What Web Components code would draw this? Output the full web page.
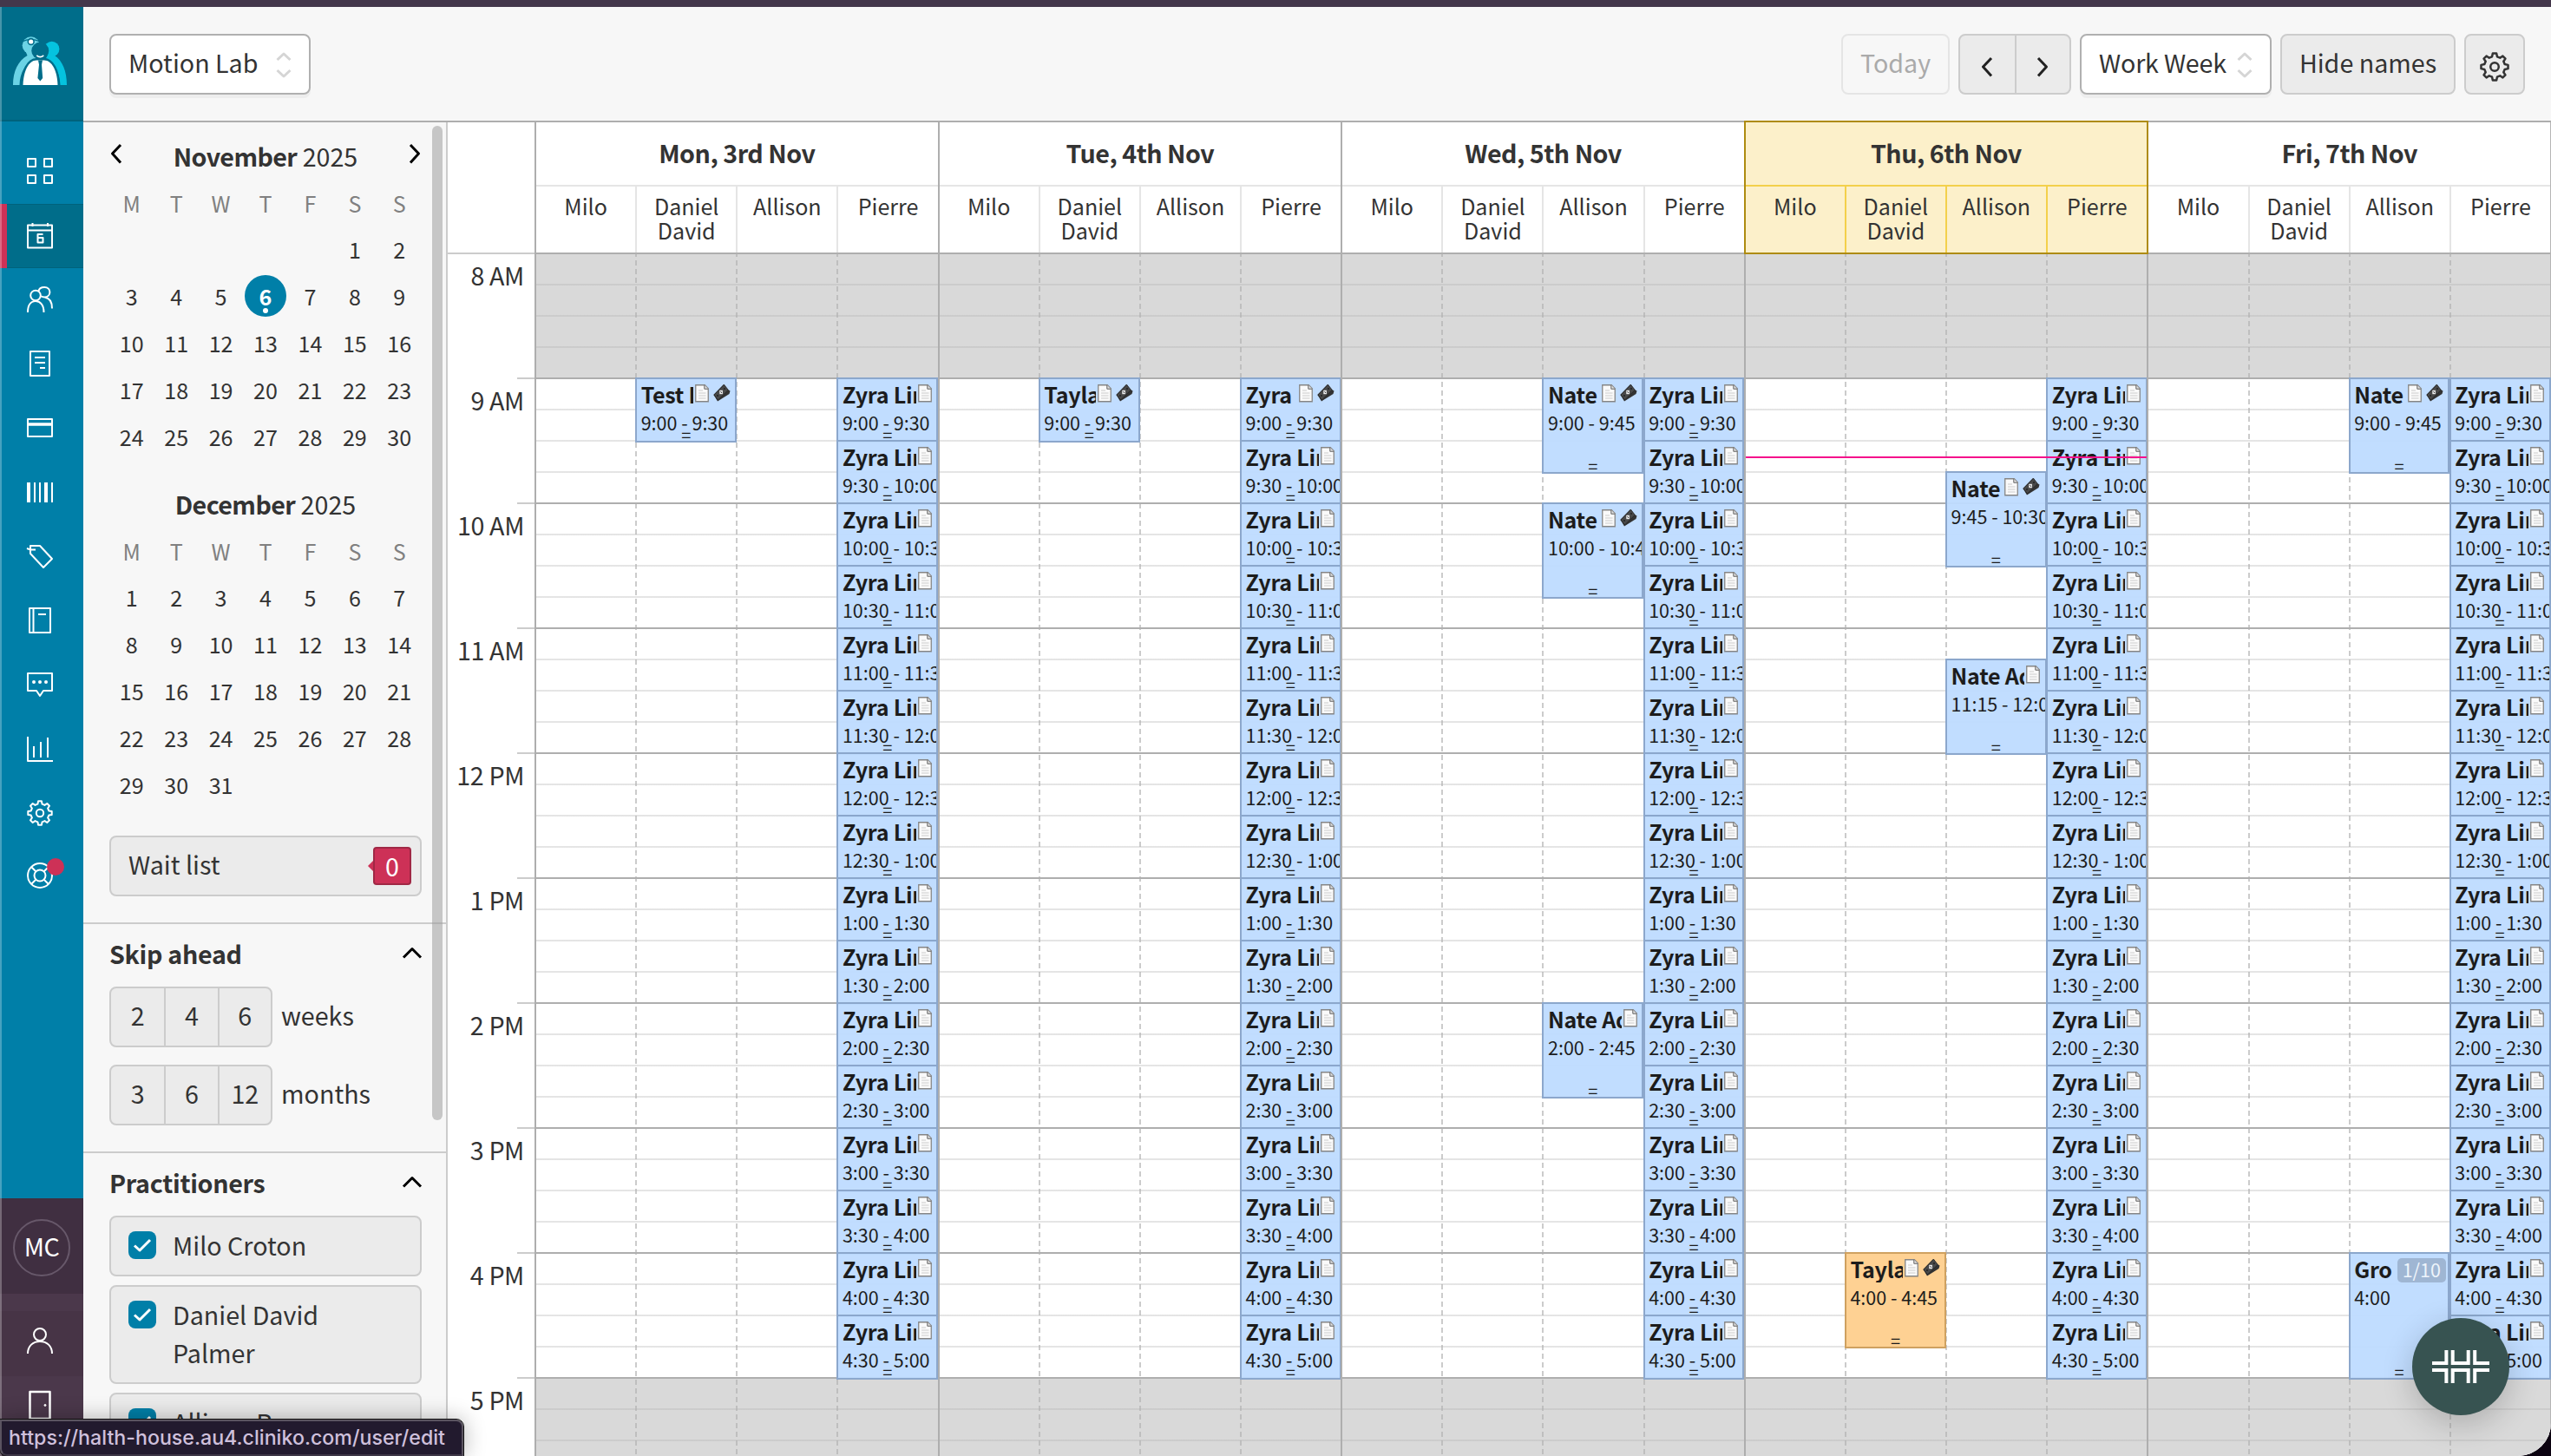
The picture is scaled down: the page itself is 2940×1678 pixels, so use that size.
<!DOCTYPE html>
<html lang="en">
<head>
<meta charset="utf-8">
<title>Appointments</title>
<style>
  html, body {
    margin: 0;
    height: 100%;
    background: #0b0210;
  }
  body {
    font-family: "Noto Sans CJK SC", "Source Sans Pro", sans-serif;
    font-size: 28.66px;
    color: #333;
    overflow: hidden;
  }
</style>
</head>
<body>
<clinic-app></clinic-app>

<script>
'use strict';

(function () {
  // eight-tooth cog outline around the centre of a 30x30 box
  function cogPath() {
    const points = [];
    for (let i = 0; i < 8; i++) {
      [[-14, 10.6], [-8, 13.8], [8, 13.8], [14, 10.6]].forEach(([offset, r]) => {
        const a = ((i * 45 + offset) * Math.PI) / 180;
        points.push(`${(15 + r * Math.sin(a)).toFixed(1)} ${(15 - r * Math.cos(a)).toFixed(1)}`);
      });
    }
    return `M${points.join('L')}Z`;
  }

  const ICONS = {
    grid: '<path d="M1 1h9v9H1zM20 1h9v9h-9zM1 20h9v9H1zM20 20h9v9h-9z"/>',
    calendar: '<path d="M1 2.500h28v26H1zM1 8.500h28M6.500 0v4M24 0v4"/><path d="M18.500 13h-6v9.500h6v-5.500h-6"/>',
    people: '<circle cx="10" cy="10.500" r="5.800"/><path d="M1 30c0-9 4-13 9-13s9.500 4 9.500 13M13.500 5.500C14 2.500 17 1 20.200 1c4 0 6.200 2.800 6.200 5.800 0 3.200-2.600 5.700-6.200 5.700-1.700 0-3-.6-4-1.300M21 12.800c5 .8 8 4.500 8 12.700"/>',
    note: '<path d="M4 1h22v28H4zM9 8h12M9 14h12M15 20h6"/>',
    card: '<path d="M1 5h28v20H1z"/><path d="M1 11h28" stroke-width="3.500"/>',
    barcode: '<path d="M2 4v23" stroke-width="4"/><path d="M9 4v23M15 4v23M29 4v23"/><path d="M22 4v23" stroke-width="4"/>',
    tag: '<path d="M4 3h11l14 15-10 10L4 12zM0 6l4 1.500h6"/>',
    book: '<path d="M3 1h24v28H3zM7.500 1v28M13 8h9"/>',
    chat: '<path d="M1 2h28v20H19l-4 6-4-6H1z"/><path d="M8 12h.01M15 12h.01M22 12h.01" stroke-width="4" stroke-linecap="round"/>',
    chart: '<path d="M1 1v28h29M8 12v13M16 7v18M24 2v23"/>',
    cog: `<path d="${cogPath()}"/><circle cx="15" cy="15" r="4.200"/>`,
    help: '<circle cx="15" cy="15" r="14"/><circle cx="15" cy="15" r="6.500"/><path d="M5 5l5.500 5.500M25 5l-5.500 5.500M5 25l5.500-5.500M25 25l-5.500-5.500"/>',
    person: '<circle cx="15" cy="8" r="7"/><path d="M1 30c0-9 6-14 14-14s14 5 14 14"/>',
    door: '<path d="M3.500 1h23v31h-23z"/><circle cx="21" cy="16.500" r="1" fill="currentColor" stroke-width="1"/>',
    left: '<path d="M20 5l-9.500 10L20 25.500"/>',
    right: '<path d="M10 5l9.500 10L10 25.500"/>',
    up: '<path d="M5 20.500l10-10 10 10"/>',
    sort: '<path d="M7.500 9L15 2l7.500 7M7.500 21l7.500 7 7.500-7"/>',
    check: '<path d="M6 15.500l6 5.500 12-12"/>'
  };

  const NAMES = ['Milo', 'Daniel David', 'Allison', 'Pierre'];

  // small base class: renders the element's template into an open shadow root
  class BaseElement extends HTMLElement {
    connectedCallback() {
      if (this.shadowRoot) return;
      const shadow = this.attachShadow({ mode: 'open' });
      const template = document.createElement('template');
      template.innerHTML = `<style>
        :host { box-sizing: border-box; }
        *, *::before, *::after { box-sizing: border-box; }
      </style>${this.render()}`;
      shadow.appendChild(template.content.cloneNode(true));
    }
  }

  class AppIcon extends BaseElement {
    render() {
      const width = this.getAttribute('stroke') || 2;
      return `
        <style>
          :host { display: block; width: 30px; height: 30px; flex: none; }
          svg { display: block; width: 100%; height: 100%; overflow: visible; }
        </style>
        <svg viewBox="0 0 30 30" fill="none" stroke="currentColor" stroke-width="${width}" stroke-linejoin="round">${ICONS[this.getAttribute('name')]}</svg>
      `;
    }
  }

  class AppLogo extends BaseElement {
    render() {
      return `
        <style>
          :host { display: block; height: 132px; padding: 34px 0 0 15px; background: #006d8a; border-bottom: 2px solid #00627c; }
          svg { display: block; }
        </style>
        <svg width="62" height="56" viewBox="0 0 62 56">
          <g fill="#6bd3e5">
            <circle cx="20.700" cy="10.300" r="10"/>
            <path d="M0 56C0 40 6 28 16.500 22L14 16l14 4-2 7C14 30 8 42 7.500 56z"/>
          </g>
          <g fill="#05c3df">
            <circle cx="44.700" cy="14.500" r="8.700"/>
            <path d="M38 25c10 7 16 17 16.500 31H62c0-16-5-28-14-34l-6-4z"/>
          </g>
          <path d="M10 6.200C17 2.500 24 2.500 31 6" fill="none" stroke="#006d8a" stroke-width="1.300"/>
          <circle cx="20.700" cy="6" r="3.400" fill="#fff" stroke="#006d8a" stroke-width="1.600"/>
          <path d="M11.500 56C12 40 18 27.500 27 27.500h9c9 0 15 12.500 15.500 28.500z" fill="#fff" stroke="#006d8a" stroke-width="5" paint-order="stroke"/>
          <circle cx="31.300" cy="16.500" r="10" fill="#006d8a"/>
          <path d="M27.300 21.800q4 3.500 8 0" fill="none" stroke="#fff" stroke-width="1.700"/>
          <path d="M29 27.500h5l-1 5 1.200 15.500-2.900 3.500-2.900-3.500L30 32.500z" fill="#006d8a"/>
        </svg>
      `;
    }
  }

  class RailItem extends BaseElement {
    render() {
      return `
        <style>
          :host { display: flex; align-items: center; height: 74px; padding: 0 0 2px 31px; color: #fff; }
          :host([active]) { padding: 0 0 0 23px; background: #006d8a; border-left: 8px solid #cd3157; box-shadow: inset 0 1px #00627c, inset 0 -1px #00627c; }
          :host([alert]) { padding-bottom: 6px; }
          .wrap { position: relative; }
          .dot { position: absolute; left: 23px; top: -5px; width: 20px; height: 20px; border-radius: 50%; background: #cd3157; }
        </style>
        <div class="wrap">
          <app-icon name="${this.getAttribute('icon')}"></app-icon>
          ${this.hasAttribute('alert') ? '<span class="dot"></span>' : ''}
        </div>
      `;
    }
  }

  class NavRail extends BaseElement {
    render() {
      const items = ['grid', 'calendar', 'people', 'note', 'card', 'barcode', 'tag', 'book', 'chat', 'chart', 'cog', 'help'];
      return `
        <style>
          :host { position: relative; display: flex; flex-direction: column; width: 96px; background: #007fa8; }
          :host::after { content: ""; position: absolute; inset: 0 auto 0 0; width: 2px; background: rgba(255, 255, 255, .28); }
          nav { flex: 1; padding-top: 21px; }
          .user { height: 297px; background: #4b384b; color: #fff; }
          .me { display: flex; align-items: center; height: 110px; padding: 4px 0 0 15px; background: #402f41; }
          .avatar { width: 66px; height: 66px; border: 2px solid #67586a; border-radius: 50%; line-height: 58px; text-align: center; letter-spacing: -.5px; }
          .profile { display: flex; align-items: center; height: 75px; margin-top: 20px; padding: 0 0 7px 31px; background: #473446; }
          .door { padding: 17px 0 0 31px; }
        </style>
        <app-logo></app-logo>
        <nav>
          ${items.map(name => `<rail-item icon="${name}" ${name === 'calendar' ? 'active' : ''} ${name === 'help' ? 'alert' : ''}></rail-item>`).join('')}
        </nav>
        <div class="user">
          <div class="me"><div class="avatar">MC</div></div>
          <div class="profile"><app-icon name="person"></app-icon></div>
          <div class="door"><app-icon name="door" stroke="2.500"></app-icon></div>
        </div>
      `;
    }
  }

  class AppSelect extends BaseElement {
    render() {
      return `
        <style>
          :host { display: flex; align-items: center; justify-content: space-between; height: 70px; padding: 0 20px 4px 20px; background: #fff; border: 2px solid #b0b0b0; border-radius: 8px; box-shadow: 0 4px 0 #ededed; white-space: nowrap; line-height: 40px; }
          app-icon { color: #d5d5d5; margin: 5px -6px 0; }
        </style>
        <slot></slot><app-icon name="sort" stroke="3"></app-icon>
      `;
    }
  }

  class AppButton extends BaseElement {
    render() {
      return `
        <style>
          :host { display: flex; align-items: center; justify-content: center; height: 70px; padding-bottom: 5px; background: #ebebeb; border: 2px solid #ccc; border-radius: 8px; line-height: 40px; white-space: nowrap; }
          :host([disabled]) { background: #f7f7f7; border-color: #e5e5e5; color: #aaa; }
        </style>
        <slot></slot>
      `;
    }
  }

  // row of joined buttons, one per slotted child
  class ButtonGroup extends BaseElement {
    render() {
      return `
        <style>
          :host { display: grid; grid-auto-flow: column; grid-auto-columns: 1fr; height: 70px; background: #ebebeb; border: 2px solid #ccc; border-radius: 8px; line-height: 40px; }
          ::slotted(*) { display: flex; align-items: center; justify-content: center; box-sizing: border-box; padding-bottom: 5px; }
          ::slotted(:not(:first-child)) { border-left: 2px solid #ccc; }
        </style>
        <slot></slot>
      `;
    }
  }

  class TopBar extends BaseElement {
    render() {
      return `
        <style>
          :host { display: flex; gap: 10px; height: 133px; padding: 31px 30px 0; background: #f7f7f7; border-bottom: 2px solid #aeaeae; }
          .space { flex: 1; }
          .place { width: 232px; }
          .today { width: 125px; }
          .arrows { width: 130px; }
          .range { width: 221px; letter-spacing: -.2px; }
          .names { width: 202px; }
          .settings { width: 70px; }
          .settings app-icon { width: 34px; height: 34px; margin-top: 10px; }
          .arrows app-icon { color: #222; margin: 11px 2px 0 0; }
        </style>
        <app-select class="place">Motion Lab</app-select>
        <div class="space"></div>
        <app-button class="today" disabled>Today</app-button>
        <button-group class="arrows">
          <span><app-icon name="left" stroke="3"></app-icon></span>
          <span><app-icon name="right" stroke="3"></app-icon></span>
        </button-group>
        <app-select class="range">Work Week</app-select>
        <app-button class="names">Hide names</app-button>
        <app-button class="settings"><app-icon name="cog" stroke="2.200"></app-icon></app-button>
      `;
    }
  }

  class MiniMonth extends BaseElement {
    render() {
      const offset = Number(this.getAttribute('offset'));
      const days = Number(this.getAttribute('days'));
      const today = Number(this.getAttribute('today'));
      let cells = '';
      for (let i = 0; i < offset; i++) cells += '<span></span>';
      for (let d = 1; d <= days; d++) {
        cells += d === today ? `<span class="today"><b>${d}</b></span>` : `<span>${d}</span>`;
      }
      return `
        <style>
          :host { display: block; }
          header { display: flex; align-items: flex-start; justify-content: space-between; height: 40px; line-height: 42px; margin-bottom: 8px; color: #333; }
          header div { flex: 1; text-align: center; }
          header b { letter-spacing: -.6px; }
          app-icon { color: #000; margin: 3px -7px 0; }
          .grid { display: grid; grid-template-columns: repeat(7, 1fr); grid-template-rows: 53px; grid-auto-rows: 54px; font-size: 25.07px; line-height: 54px; text-align: center; }
          i { font-style: normal; color: #808080; }
          .today { position: relative; display: flex; align-items: center; justify-content: center; }
          .today b { width: 48px; height: 48px; line-height: 48px; border-radius: 50%; background: #007fa8; color: #fff; }
          .today::after { content: ""; position: absolute; bottom: 7px; left: calc(50% - 3px); width: 6px; height: 6px; border-radius: 50%; background: #fff; }
        </style>
        <header>
          ${this.hasAttribute('nav') ? '<app-icon name="left" stroke="3"></app-icon>' : ''}
          <div><b>${this.getAttribute('month')}</b> 2025</div>
          ${this.hasAttribute('nav') ? '<app-icon name="right" stroke="3"></app-icon>' : ''}
        </header>
        <div class="grid">${'MTWTFSS'.split('').map(d => `<i>${d}</i>`).join('')}${cells}</div>
      `;
    }
  }

  class SidePanel extends BaseElement {
    render() {
      return `
        <style>
          :host { display: block; padding: 14px 28px 30px 30px; border-top: 2px solid #ccc; }
          header { display: flex; align-items: center; justify-content: space-between; height: 40px; line-height: 42px; margin-bottom: 18px; font-weight: bold; letter-spacing: -.3px; }
          app-icon { color: #000; margin: -3px -4px 0; }
        </style>
        <header>${this.getAttribute('heading')}<app-icon name="up" stroke="3"></app-icon></header>
        <slot></slot>
      `;
    }
  }

  class CheckItem extends BaseElement {
    render() {
      return `
        <style>
          :host { display: flex; gap: 19px; margin-bottom: 10px; padding: 10px 60px 12px 20px; background: #ebebeb; border: 2px solid #ccc; border-radius: 8px; line-height: 44px; }
          .box { flex: none; width: 32px; height: 32px; margin-top: 6px; padding: 1px; border-radius: 8px; background: #007fa8; color: #fff; }
        </style>
        <div class="box"><app-icon name="check" stroke="3"></app-icon></div>
        <div><slot></slot></div>
      `;
    }
  }

  class SideBar extends BaseElement {
    render() {
      return `
        <style>
          :host { position: relative; display: block; width: 420px; overflow: hidden; background: #f7f7f7; border-right: 2px solid #ccc; }
          .months { padding: 18px 28px 30px 30px; }
          mini-month + mini-month { margin-top: 30px; }
          .wait { display: flex; align-items: center; justify-content: space-between; height: 70px; margin-top: 32px; padding: 0 10px 0 20px; background: #ebebeb; border: 2px solid #ccc; border-radius: 8px; line-height: 60px; }
          .wait .label { padding-bottom: 5px; }
          .count { position: relative; width: 44px; height: 44px; background: #cd3157; border: 2px solid #a02845; border-radius: 4px; color: #fff; line-height: 40px; text-align: center; }
          .count::before { content: ""; position: absolute; left: -8px; top: 14px; border: 6px solid transparent; border-left: 0; border-right-color: #cd3157; }
          .row { display: flex; align-items: center; gap: 10px; line-height: 40px; }
          .row + .row { margin-top: 20px; }
          .unit { padding-bottom: 5px; }
          button-group { width: 188px; }
          .thumb { position: absolute; top: 4px; right: 4px; width: 12px; height: 1146px; border-radius: 6px; background: rgba(150, 150, 150, .5); }
        </style>
        <div class="months">
          <mini-month month="November" offset="5" days="30" today="6" nav></mini-month>
          <mini-month month="December" offset="0" days="31"></mini-month>
          <div class="wait"><span class="label">Wait list</span><span class="count">0</span></div>
        </div>
        <side-panel heading="Skip ahead">
          <div class="row"><button-group><span>2</span><span>4</span><span>6</span></button-group><span class="unit">weeks</span></div>
          <div class="row"><button-group><span>3</span><span>6</span><span>12</span></button-group><span class="unit">months</span></div>
        </side-panel>
        <side-panel heading="Practitioners">
          <check-item>Milo Croton</check-item>
          <check-item>Daniel David Palmer</check-item>
          <check-item>Allison Roe</check-item>
        </side-panel>
        <div class="thumb"></div>
      `;
    }
  }

  class AppointmentCard extends BaseElement {
    render() {
      const flags = (this.getAttribute('flags') || '').split(' ');
      const badge = this.getAttribute('badge');
      return `
        <style>
          :host { position: relative; display: block; min-width: 0; overflow: hidden; margin: 0 0 -3px 0; padding: 1px 0 0 4.5px; background: rgba(190, 219, 255, .95); border: 2px solid rgba(130, 158, 195, .85); color: #1c1c1c; }
          :host([tone="orange"]) { background: rgba(254, 207, 143, .97); border-color: #cfa160; }
          header { display: flex; align-items: flex-start; gap: 2px; height: 32px; padding-right: 5.5px; line-height: 32px; font-size: 25.07px; font-weight: bold; }
          .name { flex: 1; min-width: 0; overflow: hidden; white-space: nowrap; letter-spacing: -.25px; }
          svg { flex: none; margin-top: 5px; }
          .money { margin: 4px 0 0 3px; }
          .time { white-space: nowrap; font-size: 21.49px; line-height: 33px; }
          .grip { position: absolute; left: 0; right: 0; bottom: -6px; height: 26px; line-height: 26px; font-size: 20px; text-align: center; }
          .badge { flex: none; height: 28px; margin: 4px -3px 0 0; padding: 0 6px; border-radius: 5px; background: #9fb6d3; color: #eef4fb; font-size: 21.49px; font-weight: normal; line-height: 25px; }
        </style>
        <header>
          <span class="name"><slot></slot></span>
          ${flags.includes('note') ? `<svg width="16" height="21" viewBox="0 0 16 21"><path d="M.75.75h10.500l4 4v15H.75z" fill="#fafafa" stroke="#858585" stroke-width="1.300"/><path d="M10.800.75v4.500h4.400" fill="#ddd" stroke="#666" stroke-width="1"/><path d="M4 7h5M4 10h8.500M4 13h8.500M4 16h8.500" stroke="#ccc" stroke-width="1.100"/></svg>` : ''}
          ${flags.includes('paid') ? `<svg class="money" width="20" height="21" viewBox="0 0 20 21"><path d="M.5 13L12 1l4 5.500 3.500 2-1 3.500L5 20.500z" fill="#333"/><path d="M.8 13L12.500 1.200l4.800 6.300L5.500 19z" fill="#484848" stroke="#222" stroke-width=".8"/><rect x="7.300" y="7.800" width="3.600" height="4.400" fill="#eee"/><path d="M8.500 9l1.400 2" stroke="#444"/><circle cx="5" cy="14" r="1" fill="#222"/><circle cx="13" cy="6" r="1" fill="#222"/></svg>` : ''}
          ${badge ? `<span class="badge">${badge}</span>` : ''}
        </header>
        <div class="time">${this.getAttribute('time')}</div>
        <div class="grip">=</div>
      `;
    }
  }

  class CalendarDay extends BaseElement {
    clock(quarter) {
      const hour = 8 + Math.floor(quarter / 4);
      return `${hour > 12 ? hour - 12 : hour}:${String((quarter % 4) * 15).padStart(2, '0')}`;
    }

    card({ name, start, span, flags = 'note', tone = '', badge = '' }) {
      const time = badge ? this.clock(start) : `${this.clock(start)} - ${this.clock(start + span)}`;
      return `<appointment-card style="grid-row: ${start + 1} / span ${span}" time="${time}" flags="${flags}" tone="${tone}" badge="${badge}">${name}</appointment-card>`;
    }

    render() {
      const booked = this.bookings || {};
      // Pierre is booked back to back, 9 to 5
      const pierre = [];
      for (let q = 4; q < 36; q += 2) {
        pierre.push({ name: 'Zyra Lindt', start: q, span: 2, flags: q === 4 && this.hasAttribute('paid') ? 'note paid' : 'note' });
      }
      const columns = NAMES.map(name => (name === 'Pierre' ? pierre : booked[name] || []));
      return `
        <style>
          :host { display: flex; flex-direction: column; min-width: 0; }
          .head { position: relative; flex: none; height: 150px; border-left: 2px solid #aeaeae; background: #fff; }
          h2 { margin: 0; height: 74px; padding-bottom: 3px; border-bottom: 2px solid #e5e5e5; font-size: 28.66px; line-height: 69px; text-align: center; letter-spacing: -.5px; }
          .names { display: grid; grid-template-columns: repeat(4, 1fr); height: 76px; margin-left: -2px; font-size: 25.07px; line-height: 28px; text-align: center; }
          .names span { padding: 8px 10px 0 12px; }
          .names span + span { border-left: 2px solid #e5e5e5; padding-left: 10px; }
          :host([today]) .head { z-index: 2; height: 154px; margin: -2px -1.5px -2px 0; background: #fcf0ca; border: 2px solid #ae8b10; }
          :host([today]) h2, :host([today]) .names span { border-color: #f3d04b; }
          .body {
            position: relative;
            flex: 1;
            display: grid;
            grid-template-columns: repeat(4, 1fr);
            border-left: 2px solid #aeaeae;
            background:
              repeating-linear-gradient(#aeaeae 0 2px, transparent 2px 144px),
              repeating-linear-gradient(rgba(178, 178, 178, .34) 0 2px, transparent 2px 36px),
              linear-gradient(#d9d9d9 144px, #fff 144px 1296px, #d9d9d9 1296px);
          }
          .body > div { display: grid; grid-template-rows: repeat(38, 36px); grid-template-columns: minmax(0, 1fr); margin-left: -2px; }
          .body > div + div { background: linear-gradient(rgba(177, 177, 177, .66) 6px, transparent 6px) 0 -1px / 2px 10px repeat-y; margin-left: -1.5px; }
          .body > div:nth-child(3) { margin-left: -1px; }
          .body > div:nth-child(4) { margin: 0 -.5px; }
          .now { position: absolute; left: 0; right: -2px; top: 235px; height: 2px; background: #f5118b; }
        </style>
        <div class="head">
          <h2>${this.getAttribute('date')}</h2>
          <div class="names">${NAMES.map(n => `<span>${n}</span>`).join('')}</div>
        </div>
        <div class="body">
          ${columns.map(list => `<div>${list.map(b => this.card(b)).join('')}</div>`).join('')}
          ${this.hasAttribute('today') ? '<i class="now"></i>' : ''}
        </div>
      `;
    }
  }

  class WeekCalendar extends BaseElement {
    connectedCallback() {
      super.connectedCallback();
      const week = [
        { date: 'Mon, 3rd Nov', bookings: { 'Daniel David': [{ name: 'Test Howard', start: 4, span: 2, flags: 'note paid' }] } },
        { date: 'Tue, 4th Nov', paid: true, bookings: { 'Daniel David': [{ name: 'Tayla Reed', start: 4, span: 2, flags: 'note paid' }] } },
        { date: 'Wed, 5th Nov', bookings: { Allison: [
          { name: 'Nate Adams', start: 4, span: 3, flags: 'note paid' },
          { name: 'Nate Adams', start: 8, span: 3, flags: 'note paid' },
          { name: 'Nate Adams', start: 24, span: 3 }
        ] } },
        { date: 'Thu, 6th Nov', today: true, bookings: {
          'Daniel David': [{ name: 'Tayla Reed', start: 32, span: 3, flags: 'note paid', tone: 'orange' }],
          Allison: [
            { name: 'Nate Adams', start: 7, span: 3, flags: 'note paid' },
            { name: 'Nate Adams', start: 13, span: 3 }
          ]
        } },
        { date: 'Fri, 7th Nov', bookings: { Allison: [
          { name: 'Nate Adams', start: 4, span: 3, flags: 'note paid' },
          { name: 'Gro', start: 32, span: 4, flags: '', badge: '1/10' }
        ] } }
      ];
      const days = this.shadowRoot.querySelector('.days');
      week.forEach(({ date, bookings, today, paid }) => {
        const day = document.createElement('calendar-day');
        day.bookings = bookings;
        day.setAttribute('date', date);
        day.toggleAttribute('today', Boolean(today));
        day.toggleAttribute('paid', Boolean(paid));
        days.appendChild(day);
      });
    }

    render() {
      const hours = ['8 AM', '9 AM', '10 AM', '11 AM', '12 PM', '1 PM', '2 PM', '3 PM', '4 PM', '5 PM'];
      return `
        <style>
          :host { display: flex; flex: 1; min-width: 0; background: #fff; }
          .hours { width: 100px; flex: none; padding-top: 150px; }
          .hours div { height: 144px; padding: 6px 12px 0 0; line-height: 40px; text-align: right; letter-spacing: -.4px; background: linear-gradient(#ccc, #ccc) right top / 20px 2px no-repeat; }
          .hours div:first-child { background-size: 100% 2px; }
          .days { flex: 1; display: grid; grid-template-columns: repeat(5, minmax(0, 1fr)); border-right: 1.5px solid #b5b5b5; }
        </style>
        <div class="hours">${hours.map(h => `<div>${h}</div>`).join('')}</div>
        <div class="days"></div>
      `;
    }
  }

  class StatusTip extends BaseElement {
    render() {
      return `
        <style>
          :host { position: absolute; left: 0; bottom: 0; z-index: 5; width: 534px; height: 42px; padding-left: 8px; background: #221a2e; border: 2px solid #5a5360; border-bottom-color: #3d3646; border-radius: 0 8px 0 8px; outline: 1px solid #111; box-shadow: 0 0 26px rgba(0, 0, 0, .32); color: #cfc0dc; font: 500 23.200px/38px Inter, sans-serif; white-space: nowrap; }
        </style>
        <slot></slot>
      `;
    }
  }

  class FloatingAction extends BaseElement {
    render() {
      return `
        <style>
          :host { position: absolute; right: 48px; bottom: 47px; z-index: 5; display: flex; align-items: center; justify-content: center; width: 112px; height: 112px; border-radius: 50%; background: #375351; box-shadow: 0 10px 36px rgba(0, 0, 0, .2); }
        </style>
        <svg width="66" height="38" viewBox="0 0 66 38" fill="none" stroke="#fff" stroke-width="4">
          <path d="M0 15h16.400V0M23.700 0v15h18V0M49.200 0v15H66M0 23h16.400v15M23.700 38V23h18v15M49.200 38V23H66"/>
        </svg>
      `;
    }
  }

  class ClinicApp extends BaseElement {
    render() {
      return `
        <style>
          :host { position: relative; display: flex; width: 2940px; height: 1678px; overflow: hidden; background: #fff; border-top: 8px solid #43374b; border-bottom-right-radius: 38px; }
          main { flex: 1; min-width: 0; display: flex; flex-direction: column; }
          .content { flex: 1; min-height: 0; display: flex; }
        </style>
        <nav-rail></nav-rail>
        <main>
          <top-bar></top-bar>
          <div class="content">
            <side-bar></side-bar>
            <week-calendar></week-calendar>
          </div>
        </main>
        <floating-action></floating-action>
        <status-tip>https://halth-house.au4.cliniko.com/user/edit</status-tip>
      `;
    }
  }

  customElements.define('app-icon', AppIcon);
  customElements.define('app-logo', AppLogo);
  customElements.define('rail-item', RailItem);
  customElements.define('nav-rail', NavRail);
  customElements.define('app-select', AppSelect);
  customElements.define('app-button', AppButton);
  customElements.define('button-group', ButtonGroup);
  customElements.define('top-bar', TopBar);
  customElements.define('mini-month', MiniMonth);
  customElements.define('side-panel', SidePanel);
  customElements.define('check-item', CheckItem);
  customElements.define('side-bar', SideBar);
  customElements.define('appointment-card', AppointmentCard);
  customElements.define('calendar-day', CalendarDay);
  customElements.define('week-calendar', WeekCalendar);
  customElements.define('status-tip', StatusTip);
  customElements.define('floating-action', FloatingAction);
  customElements.define('clinic-app', ClinicApp);
})();
</script>
</body>
</html>
